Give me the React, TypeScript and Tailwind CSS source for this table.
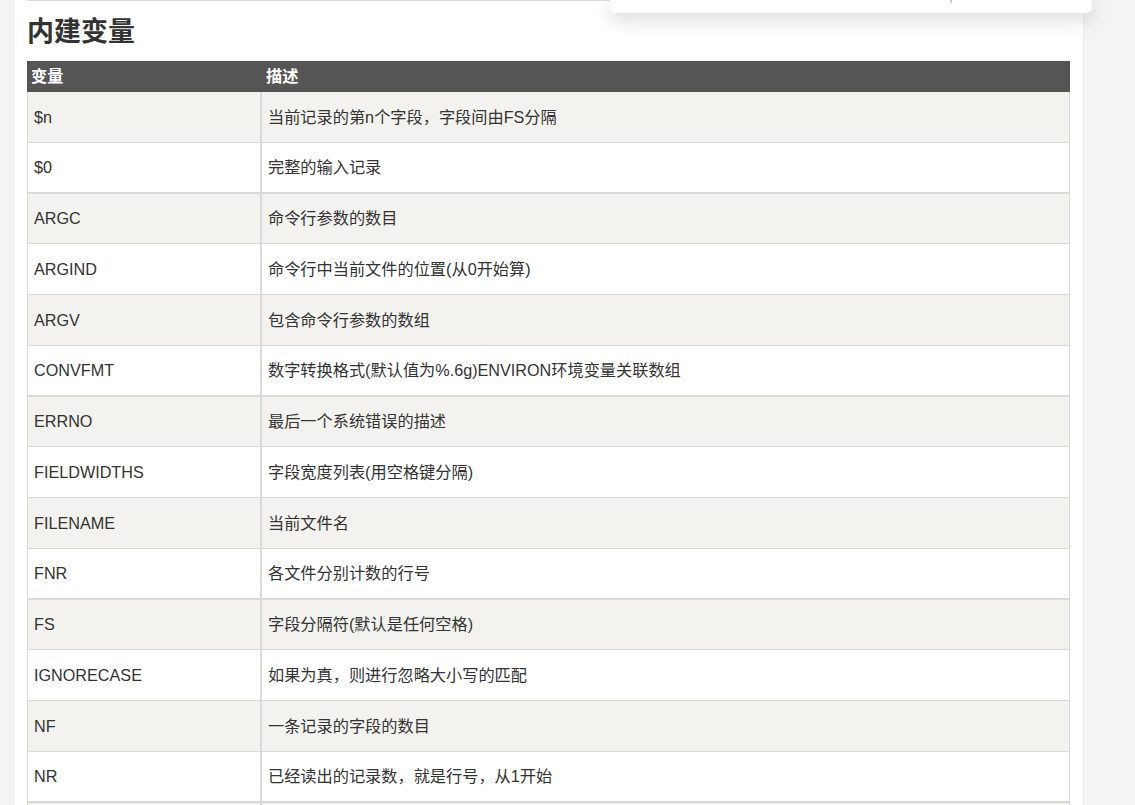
import React from "react";

type Row = { name: string; desc: string; h: string; b: string };

const rows: Row[] = [
  { name: "$n", desc: "当前记录的第n个字段，字段间由FS分隔", h: "h-[51px]", b: "border-b" },
  { name: "$0", desc: "完整的输入记录", h: "h-[51px]", b: "border-b-2" },
  { name: "ARGC", desc: "命令行参数的数目", h: "h-[50px]", b: "border-b" },
  { name: "ARGIND", desc: "命令行中当前文件的位置(从0开始算)", h: "h-[51px]", b: "border-b" },
  { name: "ARGV", desc: "包含命令行参数的数组", h: "h-[51px]", b: "border-b" },
  { name: "CONVFMT", desc: "数字转换格式(默认值为%.6g)ENVIRON环境变量关联数组", h: "h-[51px]", b: "border-b-2" },
  { name: "ERRNO", desc: "最后一个系统错误的描述", h: "h-[50px]", b: "border-b" },
  { name: "FIELDWIDTHS", desc: "字段宽度列表(用空格键分隔)", h: "h-[51px]", b: "border-b" },
  { name: "FILENAME", desc: "当前文件名", h: "h-[51px]", b: "border-b" },
  { name: "FNR", desc: "各文件分别计数的行号", h: "h-[51px]", b: "border-b-2" },
  { name: "FS", desc: "字段分隔符(默认是任何空格)", h: "h-[50px]", b: "border-b" },
  { name: "IGNORECASE", desc: "如果为真，则进行忽略大小写的匹配", h: "h-[51px]", b: "border-b" },
  { name: "NF", desc: "一条记录的字段的数目", h: "h-[51px]", b: "border-b" },
  { name: "NR", desc: "已经读出的记录数，就是行号，从1开始", h: "h-[51px]", b: "border-b-2" },
  { name: "OFMT", desc: "数字的输出格式(默认值是%.6g)", h: "h-[50px]", b: "border-b" },
];

export default function App() {
  return (
    <div
      className="relative flex w-[1135px] h-[805px] overflow-hidden bg-[#f4f4f4] text-[#333]"
      style={{ fontFamily: '"Liberation Sans", Arial, "Noto Sans CJK SC", sans-serif' }}
    >
      <div className="w-[14px] shrink-0 border-r border-[#ebebeb]" />
      <div className="w-[1070px] shrink-0 bg-white border-r border-[#ececec] px-[13px]">
        <div className="border-t border-[#dddddd]">
          <h2 className="text-[27px] leading-[36px] font-bold pt-[13px] pb-[11px] text-[#333]">内建变量</h2>
          <div className="w-[1043px]">
            <div className="flex h-[31px] bg-[#555555] text-white font-bold text-[16.2px] items-center">
              <div className="w-[235px] pl-[4px]">变量</div>
              <div className="flex-1 pl-[4px]">描述</div>
            </div>
            {rows.map((r, i) => (
              <div
                key={r.name}
                className={`flex ${r.h} ${r.b} border-[#d9d9d9] text-[16.2px] ${
                  i % 2 === 0 ? "bg-[#f3f2ee]" : "bg-white"
                }`}
              >
                <div className="w-[235px] shrink-0 flex items-center border-l border-r-2 border-[#d9d9d9] pl-[6px]">
                  {r.name}
                </div>
                <div className="flex-1 flex items-center border-r border-[#d9d9d9] pl-[6px]">
                  {r.desc}
                </div>
              </div>
            ))}
          </div>
        </div>
      </div>
      <div className="absolute left-[610px] top-0 w-[482px] h-[13px] bg-white rounded-b-[6px] shadow-[0_6px_18px_rgba(0,0,0,0.18)]">
        <div className="absolute left-[340px] top-0 w-[2px] h-[3px] bg-[#cccccc]" />
      </div>
    </div>
  );
}
